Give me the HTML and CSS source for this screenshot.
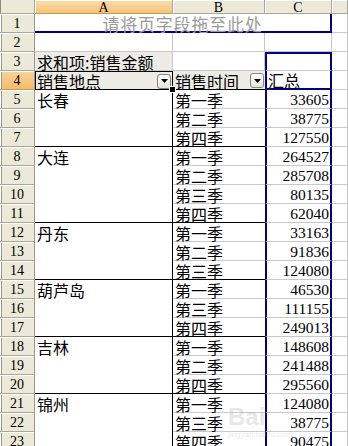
FILE: index.html
```html
<!DOCTYPE html>
<html lang="zh-CN">
<head>
<meta charset="utf-8">
<title>数据透视表</title>
<link rel="stylesheet" href="styles.css">
</head>
<body>
<div class="sheet">
  <div class="hd corner"></div>
  <div class="hd col sel">A</div>
  <div class="hd col">B</div>
  <div class="hd col">C</div>
  <div class="hd col"></div>

  <div class="hd rn">1</div>
  <div class="page">请将页字段拖至此处</div>
  <div class="c"></div>

  <div class="hd rn">2</div>
  <div class="c"></div><div class="c"></div><div class="c"></div><div class="c"></div>

  <div class="hd rn">3</div>
  <div class="c lbl">求和项:销售金额</div>
  <div class="c"></div>
  <div class="c val top"></div>
  <div class="c"></div>

  <div class="hd rn sel">4</div>
  <div class="c fld cur">销售地点<span class="dd"><svg width="7" height="4" viewBox="0 0 7 4"><path d="M0 0h7L3.5 4z"/></svg></span><span class="handle"></span></div>
  <div class="c fld fb">销售时间<span class="dd"><svg width="7" height="4" viewBox="0 0 7 4"><path d="M0 0h7L3.5 4z"/></svg></span></div>
  <div class="c val vh">汇总</div>
  <div class="c"></div>

  <div class="hd rn">5</div><div class="c grp s3">长春</div><div class="c q">第一季</div><div class="c val num">33605</div><div class="c"></div>
  <div class="hd rn">6</div><div class="c q">第二季</div><div class="c val num">38775</div><div class="c"></div>
  <div class="hd rn">7</div><div class="c q end">第四季</div><div class="c val num">127550</div><div class="c"></div>

  <div class="hd rn">8</div><div class="c grp s4">大连</div><div class="c q">第一季</div><div class="c val num">264527</div><div class="c"></div>
  <div class="hd rn">9</div><div class="c q">第二季</div><div class="c val num">285708</div><div class="c"></div>
  <div class="hd rn">10</div><div class="c q">第三季</div><div class="c val num">80135</div><div class="c"></div>
  <div class="hd rn">11</div><div class="c q end">第四季</div><div class="c val num">62040</div><div class="c"></div>

  <div class="hd rn">12</div><div class="c grp s3">丹东</div><div class="c q">第一季</div><div class="c val num">33163</div><div class="c"></div>
  <div class="hd rn">13</div><div class="c q">第二季</div><div class="c val num">91836</div><div class="c"></div>
  <div class="hd rn">14</div><div class="c q end">第三季</div><div class="c val num">124080</div><div class="c"></div>

  <div class="hd rn">15</div><div class="c grp s3">葫芦岛</div><div class="c q">第一季</div><div class="c val num">46530</div><div class="c"></div>
  <div class="hd rn">16</div><div class="c q">第三季</div><div class="c val num">111155</div><div class="c"></div>
  <div class="hd rn">17</div><div class="c q end">第四季</div><div class="c val num">249013</div><div class="c"></div>

  <div class="hd rn">18</div><div class="c grp s3">吉林</div><div class="c q">第一季</div><div class="c val num">148608</div><div class="c"></div>
  <div class="hd rn">19</div><div class="c q">第二季</div><div class="c val num">241488</div><div class="c"></div>
  <div class="hd rn">20</div><div class="c q end">第四季</div><div class="c val num">295560</div><div class="c"></div>

  <div class="hd rn">21</div><div class="c grp s3">锦州</div><div class="c q">第一季</div><div class="c val num">124080</div><div class="c"></div>
  <div class="hd rn">22</div><div class="c q">第三季</div><div class="c val num">38775</div><div class="c"></div>
  <div class="hd rn">23</div><div class="c q">第四季</div><div class="c val num">90475</div><div class="c"></div>

  <div class="wm"><span class="wm-big">Bai</span><span class="wm-small">jingyan.baidu.com</span></div>
</div>
</body>
</html>
```
FILE: styles.css
```css
html, body {
  margin: 0;
  padding: 0;
  background: #fff;
  overflow: hidden;
}

.sheet {
  position: relative;
  display: grid;
  grid-template-columns: 35px 138px 92px 67px 16px;
  grid-template-rows: 14px repeat(23, 19px);
  font-family: "Noto Sans CJK SC", sans-serif;
  font-size: 16px;
  line-height: 18px;
  color: #000;
  width: 348px;
  height: 446px;
  overflow: hidden;
}

.sheet > div {
  box-sizing: border-box;
}

/* headers */
.hd {
  background: #ece9d8;
  border-right: 1px solid #aca899;
  border-bottom: 1px solid #aca899;
  box-shadow: inset 1px 1px 0 #fff;
  display: flex;
  align-items: center;
  justify-content: center;
  font-family: "Liberation Serif", serif;
  color: #000;
}
.corner {
  box-shadow: inset 1px 0 0 #8e8c80;
}
.col {
  font-size: 14px;
  line-height: 13px;
  padding-top: 1px;
}
.rn {
  font-size: 14px;
  line-height: 16px;
  padding-top: 1px;
  border-right-color: #9a988a;
  box-shadow: inset 1px 1px 0 #fff, inset 2px 0 0 #9a988a;
}
.hd.sel {
  background: linear-gradient(#fbdcaa, #f6c37a);
  border-bottom-color: #c99a55;
}
.rn.sel {
  background: linear-gradient(#f9d49c, #f4bb6c);
}

/* ordinary cells */
.c {
  background: #fff;
  border-right: 1px solid #c8c8c8;
  border-bottom: 1px solid #c8c8c8;
  padding: 1px 2px 0 2px;
  display: flex;
  align-items: center;
  white-space: nowrap;
}

/* page field area */
.page {
  grid-column: span 3;
  border-right: 2px solid #000080;
  border-bottom: 2px solid #000080;
  display: flex;
  align-items: center;
  justify-content: center;
  font-size: 17px;
  line-height: 17px;
  letter-spacing: 0.8px;
  color: #9b9b9b;
  padding-top: 1px;
  white-space: nowrap;
}

.lbl {
  background: #ecebe6;
}

.fld {
  background: #ecebe4;
  padding-right: 1px;
}
.fb {
  border-right: none;
  border-bottom: 1px solid #000;
  padding-left: 2px;
}
.cur {
  position: relative;
  border: 1px solid #000;
  padding-left: 1px;
}
.handle {
  position: absolute;
  right: -4px;
  bottom: -4px;
  width: 5px;
  height: 5px;
  background: #000;
  border: 1px solid #fff;
  z-index: 2;
}
.dd {
  margin-left: auto;
  width: 14px;
  height: 15px;
  flex: none;
  box-sizing: border-box;
  border: 1px solid #86857d;
  border-radius: 3px;
  background: linear-gradient(#ffffff, #e4e2da);
  display: flex;
  align-items: center;
  justify-content: center;
}
.dd svg {
  display: block;
  fill: #000;
}

/* value column (navy box) */
.val {
  border-left: 2px solid #000080;
  border-right: 2px solid #000080;
  padding-left: 1px;
  padding-right: 1px;
}
.val.top {
  border-top: 2px solid #000080;
}
.val.vh {
  border-bottom: 2px solid #000080;
}
.num {
  justify-content: flex-end;
  font-family: "Liberation Serif", serif;
  font-size: 15.5px;
}

/* row field A groups */
.grp {
  align-items: flex-start;
  border-right: 1px solid #000;
  border-bottom: 1px solid #000;
  padding-top: 1px;
}
.s3 { grid-row: span 3; }
.s4 { grid-row: span 4; }

.q {
  border-right: none;
}
.q.end {
  border-bottom: 1px solid #000;
}

/* faint watermark overlay */
.wm {
  position: absolute;
  left: 228px;
  top: 404px;
  display: flex;
  flex-direction: column;
  pointer-events: none;
  color: rgba(170, 170, 170, 0.28);
  font-family: "Liberation Sans", sans-serif;
}
.wm-big {
  font-size: 24px;
  font-weight: bold;
  line-height: 26px;
}
.wm-small {
  font-size: 8px;
  line-height: 10px;
}
```
